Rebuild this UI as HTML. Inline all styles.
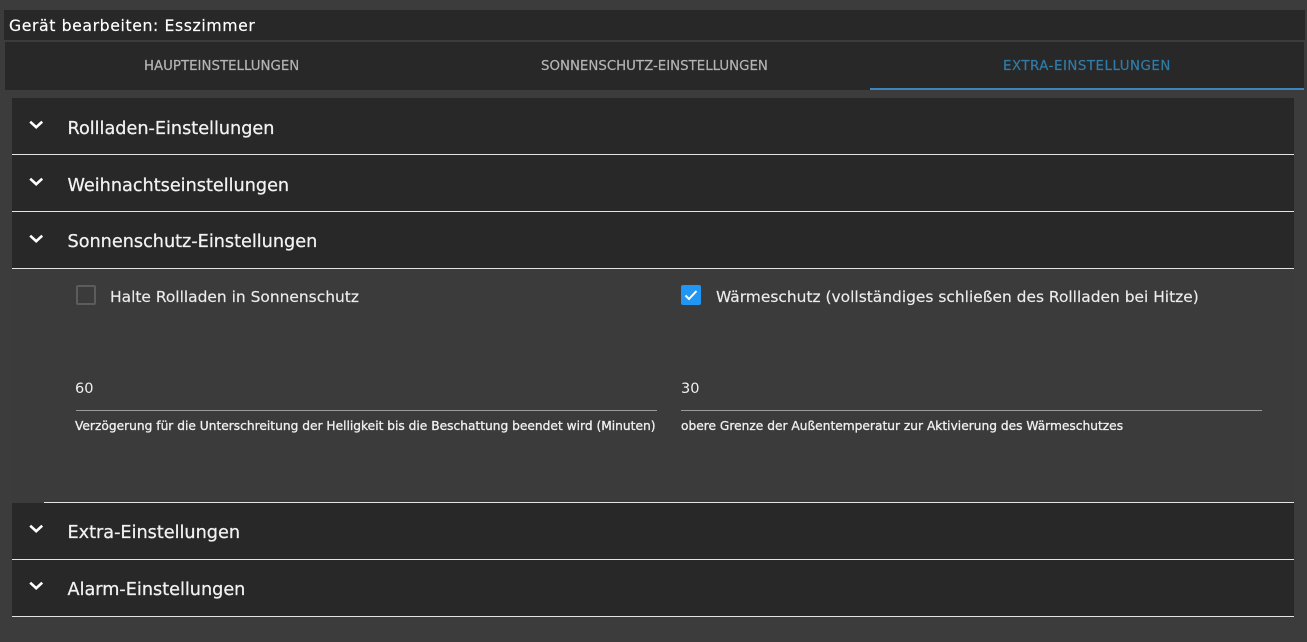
<!DOCTYPE html>
<html lang="de"><head><meta charset="utf-8"><title>Gerät bearbeiten</title>
<style>
html,body{margin:0;padding:0}
body{width:1307px;height:642px;background:#3c3c3c;overflow:hidden;position:relative;font-family:"DejaVu Sans","Liberation Sans",sans-serif;color:#fff}
.a{position:absolute;white-space:nowrap}
.bar{position:absolute;background:#282828}
.line{position:absolute;background:#e4e4e4;height:1px}
.h{position:absolute;left:67.5px;font-size:17.65px;line-height:20px;color:#f2f2f2;white-space:nowrap;-webkit-text-stroke:.25px #f2f2f2}
.tab{position:absolute;top:59px;font-size:13.35px;line-height:16px;color:#b4b4b4;white-space:nowrap;-webkit-text-stroke:.2px #b4b4b4}
.chev{position:absolute;left:29px;width:15px;height:10px}
.lab{font-size:15.45px;line-height:20px;color:#ececec;-webkit-text-stroke:.15px #ececec}
.sub{font-size:12.22px;line-height:16px;color:#f0f0f0;-webkit-text-stroke:.3px #f0f0f0}
.num{font-size:14.5px;line-height:20px;color:#f0f0f0}
</style></head><body>
<div class="bar" style="left:4px;top:10px;width:1301px;height:30px"></div>
<div class="a" style="left:9px;top:16px;font-size:15.7px;line-height:20px;letter-spacing:.6px;-webkit-text-stroke:.15px #fff">Gerät bearbeiten: Esszimmer</div>
<div class="bar" style="left:5px;top:42px;width:1299px;height:48px"></div>
<div class="tab" style="left:144px">HAUPTEINSTELLUNGEN</div>
<div class="tab" style="left:541px">SONNENSCHUTZ-EINSTELLUNGEN</div>
<div class="tab" style="left:1003px;color:#2f7ca8;-webkit-text-stroke:.2px #2f7ca8;letter-spacing:.52px">EXTRA-EINSTELLUNGEN</div>
<div style="position:absolute;left:870px;top:88px;width:434px;height:2px;background:#3d85bd"></div>

<div class="bar" style="left:12px;top:98px;width:1282px;height:170px"></div>
<div class="bar" style="left:12px;top:503px;width:1282px;height:114px"></div>
<div style="position:absolute;left:12px;top:269px;width:1282px;height:234px;background:#3b3b3b"></div>

<div class="line" style="left:12px;top:154px;width:1282px"></div>
<div class="line" style="left:12px;top:211px;width:1282px"></div>
<div class="line" style="left:12px;top:268px;width:1282px"></div>
<div class="line" style="left:44px;top:502px;width:1250px"></div>
<div class="line" style="left:12px;top:559px;width:1282px"></div>
<div class="line" style="left:12px;top:616px;width:1282px"></div>

<svg class="chev" style="top:120px" viewBox="0 0 15 10"><path d="M1.2 1.7 7.2 7.2 13.2 1.7" fill="none" stroke="#fff" stroke-width="2.6"/></svg>
<svg class="chev" style="top:177px" viewBox="0 0 15 10"><path d="M1.2 1.7 7.2 7.2 13.2 1.7" fill="none" stroke="#fff" stroke-width="2.6"/></svg>
<svg class="chev" style="top:234px" viewBox="0 0 15 10"><path d="M1.2 1.7 7.2 7.2 13.2 1.7" fill="none" stroke="#fff" stroke-width="2.6"/></svg>
<svg class="chev" style="top:524px" viewBox="0 0 15 10"><path d="M1.2 1.7 7.2 7.2 13.2 1.7" fill="none" stroke="#fff" stroke-width="2.6"/></svg>
<svg class="chev" style="top:581px" viewBox="0 0 15 10"><path d="M1.2 1.7 7.2 7.2 13.2 1.7" fill="none" stroke="#fff" stroke-width="2.6"/></svg>

<div class="h" style="top:119px">Rollladen-Einstellungen</div>
<div class="h" style="top:176px">Weihnachtseinstellungen</div>
<div class="h" style="top:232px">Sonnenschutz-Einstellungen</div>
<div class="h" style="top:523px">Extra-Einstellungen</div>
<div class="h" style="top:580px">Alarm-Einstellungen</div>

<div style="position:absolute;left:76px;top:285px;width:16px;height:16px;border:2px solid #5c5c5c;border-radius:2px"></div>
<div class="a lab" style="left:110px;top:287px">Halte Rollladen in Sonnenschutz</div>
<svg style="position:absolute;left:681px;top:285px" width="20" height="20" viewBox="0 0 20 20"><rect width="20" height="20" rx="2" fill="#2196f3"/><path d="M4.5 10.5 8 14 15.5 6" fill="none" stroke="#fff" stroke-width="2"/></svg>
<div class="a lab" style="left:716px;top:287px">Wärmeschutz (vollständiges schließen des Rollladen bei Hitze)</div>

<div class="a num" style="left:75px;top:379px">60</div>
<div class="a num" style="left:681px;top:379px">30</div>
<div style="position:absolute;left:76px;top:410px;width:581px;height:1px;background:#9a9a9a"></div>
<div style="position:absolute;left:681px;top:410px;width:581px;height:1px;background:#9a9a9a"></div>
<div class="a sub" style="left:75px;top:418px">Verzögerung für die Unterschreitung der Helligkeit bis die Beschattung beendet wird (Minuten)</div>
<div class="a sub" style="left:681px;top:418px">obere Grenze der Außentemperatur zur Aktivierung des Wärmeschutzes</div>
</body></html>
